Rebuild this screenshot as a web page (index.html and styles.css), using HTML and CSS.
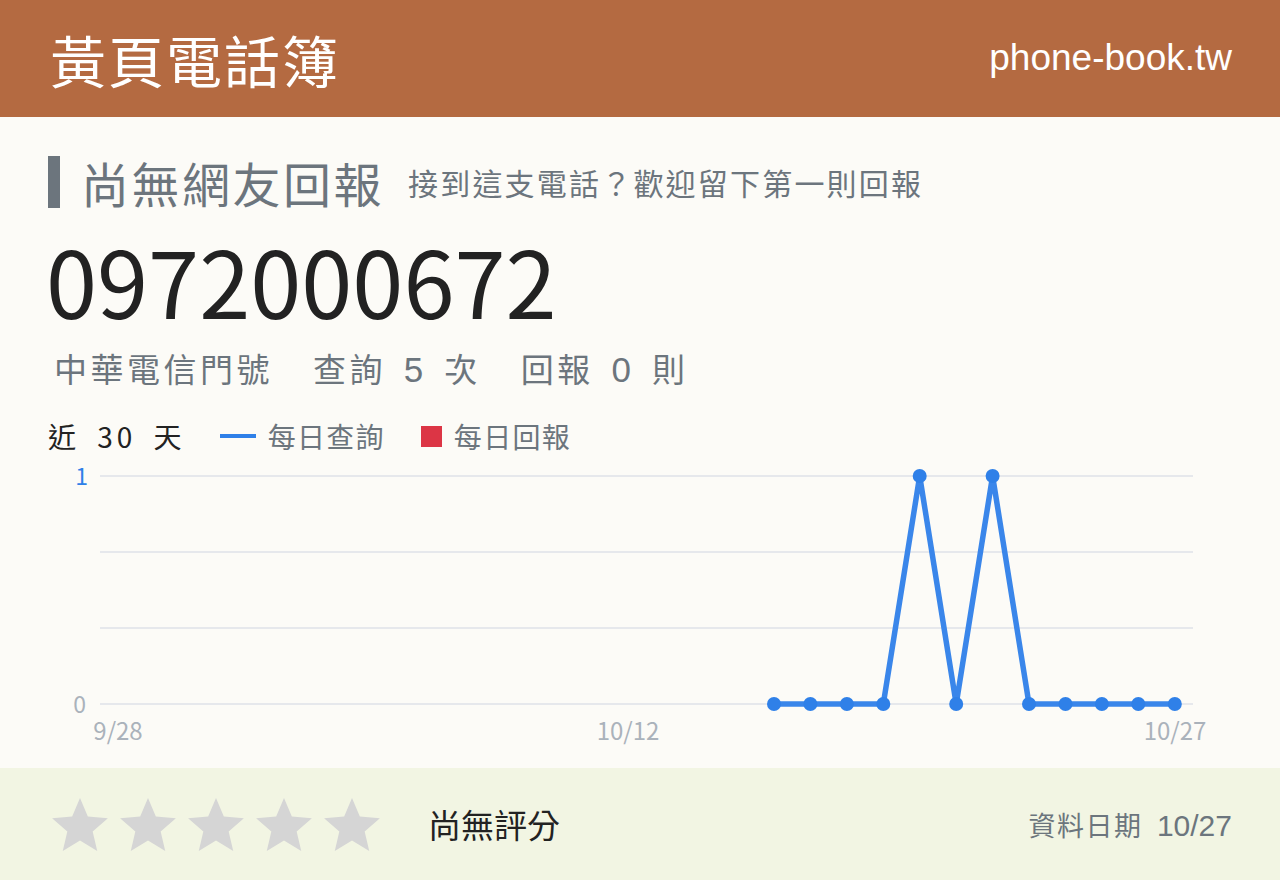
FILE: index.html
```html
<!DOCTYPE html>
<html lang="zh-Hant">
<head>
    <meta charset="UTF-8">
    <meta name="viewport" content="width=device-width, initial-scale=1.0">
    <title>0972000672 - 黃頁電話簿</title>
    <link rel="stylesheet" href="styles.css">
</head>
<body>
    <header class="top">
        <div class="brand">黃頁電話簿</div>
        <div class="site">phone-book.tw</div>
    </header>

    <main class="content">
        <h1 class="heading">
            <span class="bar"></span>
            <span class="heading-main">尚無網友回報</span>
            <span class="heading-sub">接到這支電話？歡迎留下第一則回報</span>
        </h1>

        <div class="number">0972000672</div>

        <div class="stats">
            <span class="stat">中華電信門號</span>
            <span class="stat">查詢 <b>5</b> 次</span>
            <span class="stat">回報 <b>0</b> 則</span>
        </div>

        <div class="legend">
            <span class="range">近 30 天</span>
            <span class="key"><i class="swatch line"></i>每日查詢</span>
            <span class="key"><i class="swatch box"></i>每日回報</span>
        </div>

        <svg class="chart" viewBox="48 458 1184 310">
            <g class="grid">
                <line x1="100" y1="476" x2="1193" y2="476"/>
                <line x1="100" y1="552" x2="1193" y2="552"/>
                <line x1="100" y1="628" x2="1193" y2="628"/>
                <line x1="100" y1="704" x2="1193" y2="704"/>
            </g>
            <text class="ytick one" x="88" y="485">1</text>
            <text class="ytick" x="86" y="713">0</text>
            <text class="xtick" x="118" y="740">9/28</text>
            <text class="xtick" x="628" y="740">10/12</text>
            <text class="xtick" x="1175" y="740">10/27</text>
            <g id="series"></g>
        </svg>
    </main>

    <footer class="rating">
        <div class="stars">
            <svg viewBox="2 2 20 19"><path d="M12 17.27L18.18 21l-1.64-7.03L22 9.24l-7.19-.61L12 2 9.19 8.63 2 9.24l5.460 4.73L5.82 21z"/></svg>
            <svg viewBox="2 2 20 19"><path d="M12 17.27L18.18 21l-1.64-7.03L22 9.24l-7.19-.61L12 2 9.19 8.63 2 9.24l5.46 4.73L5.82 21z"/></svg>
            <svg viewBox="2 2 20 19"><path d="M12 17.27L18.18 21l-1.64-7.03L22 9.24l-7.19-.61L12 2 9.19 8.63 2 9.24l5.46 4.73L5.82 21z"/></svg>
            <svg viewBox="2 2 20 19"><path d="M12 17.27L18.18 21l-1.64-7.03L22 9.24l-7.19-.61L12 2 9.19 8.63 2 9.24l5.46 4.73L5.82 21z"/></svg>
            <svg viewBox="2 2 20 19"><path d="M12 17.27L18.18 21l-1.64-7.03L22 9.24l-7.19-.61L12 2 9.19 8.63 2 9.24l5.46 4.73L5.82 21z"/></svg>
        </div>
        <div class="no-score">尚無評分</div>
        <div class="updated"><span>資料日期</span> 10/27</div>
    </footer>

    <script>
const SVG_NS = "http://www.w3.org/2000/svg";
// last 30 days, null = no data yet
const queries = [
  null, null, null, null, null, null, null, null, null, null,
  null, null, null, null, null, null, null, null,
  0, 0, 0, 0, 1, 0, 1, 0, 0, 0, 0, 0
];

const area = { left: 100, right: 1193, top: 476, bottom: 704 };
const step = (area.right - area.left) / queries.length;

let pts = [];
queries.forEach((v, i) => {
  if (v === null) return;
  let x = area.left + (i + 0.5) * step;
  let y = area.bottom - v * (area.bottom - area.top);
  pts.push({ x: x, y: y });
});

const series = document.getElementById("series");
let line = document.createElementNS(SVG_NS, "polyline");
line.setAttribute("points", pts.map(p => p.x.toFixed(1) + "," + p.y).join(" "));
line.setAttribute("class", "q-line");
series.appendChild(line);

pts.forEach(p => {
  let dot = document.createElementNS(SVG_NS, "circle");
  dot.setAttribute("cx", p.x.toFixed(1));
  dot.setAttribute("cy", p.y);
  dot.setAttribute("r", 7);
  dot.setAttribute("class", "q-dot");
  series.appendChild(dot);
});
    </script>
</body>
</html>
```

FILE: styles.css
```css
*{box-sizing:border-box;}
body{
  margin:0;
  background:#fcfbf7;
  font-family:"Liberation Sans","Noto Sans CJK TC",sans-serif;
  color:#6c757d;
}

.top{
  height:117px;
  background:#b46a41;
  color:#fff;
  display:flex;
  align-items:center;
  justify-content:space-between;
  padding:0 48px 0 50px;
}
.brand{font-family:"Noto Sans CJK TC",sans-serif;font-size:56px;letter-spacing:2px;line-height:1;}
.site{font-size:37px;margin-top:-2px;}

.content{
  height:651px;
  padding:39px 48px 0;
  display:flex;
  flex-direction:column;
}

.heading{
  margin:0;
  height:52px;
  display:flex;
  align-items:center;
  font-weight:normal;
  font-family:"Noto Sans CJK TC",sans-serif;
}
.bar{width:12px;height:52px;background:#6c757d;margin-right:21px;}
.heading-main{font-size:48px;letter-spacing:2.5px;}
.heading-sub{font-size:30px;margin-left:24px;letter-spacing:2.2px;}

.number{
  font-family:"Noto Sans CJK TC",sans-serif;
  font-size:92px;
  line-height:100px;
  color:#222;
  margin-top:21px;
  margin-left:-2px;
}

.stats{
  display:flex;
  gap:40px;
  font-size:33px;
  margin-top:15px;
  margin-left:6px;
  letter-spacing:3.5px;
}
.stats b{font-weight:normal;font-size:35px;margin:0 5px;}

.legend{
  display:flex;
  align-items:center;
  margin-top:24px;
  font-family:"Noto Sans CJK TC",sans-serif;
}
.range{font-size:28px;color:#222;letter-spacing:4px;word-spacing:7px;margin-right:34px;}
.key{display:flex;align-items:center;font-size:28px;letter-spacing:1.3px;margin-right:36px;}
.swatch{display:inline-block;margin-right:12px;}
.swatch.line{width:36px;height:4px;background:#2f80e8;}
.swatch.box{width:21px;height:21px;background:#dc3545;}

.chart{
  margin-top:auto;
  width:1184px;
  height:310px;
  display:block;
  font-family:"Noto Sans CJK TC",sans-serif;
}
.grid line{stroke:#e6e8ec;stroke-width:2;}
.ytick{font-size:23px;fill:#aab2bb;text-anchor:end;}
.ytick.one{fill:#2f80e8;}
.xtick{font-size:24px;fill:#aab2bb;text-anchor:middle;}
.q-line{fill:none;stroke:#3a86ea;stroke-width:5.5;stroke-linejoin:miter;}
.q-dot{fill:#2f80e8;}

.rating{
  height:112px;
  background:#f2f5e3;
  display:flex;
  align-items:center;
  padding:0 48px 0 52px;
}
.stars{display:flex;gap:12px;}
.stars svg{width:56px;height:53px;fill:#d5d5d5;display:block;}
.no-score{
  font-family:"Noto Sans CJK TC",sans-serif;
  font-size:33px;
  color:#222;
  margin-left:48px;
}
.updated{margin-left:auto;font-size:30px;}
.updated span{font-family:"Noto Sans CJK TC",sans-serif;font-size:27px;letter-spacing:1.5px;margin-right:6px;}
```
